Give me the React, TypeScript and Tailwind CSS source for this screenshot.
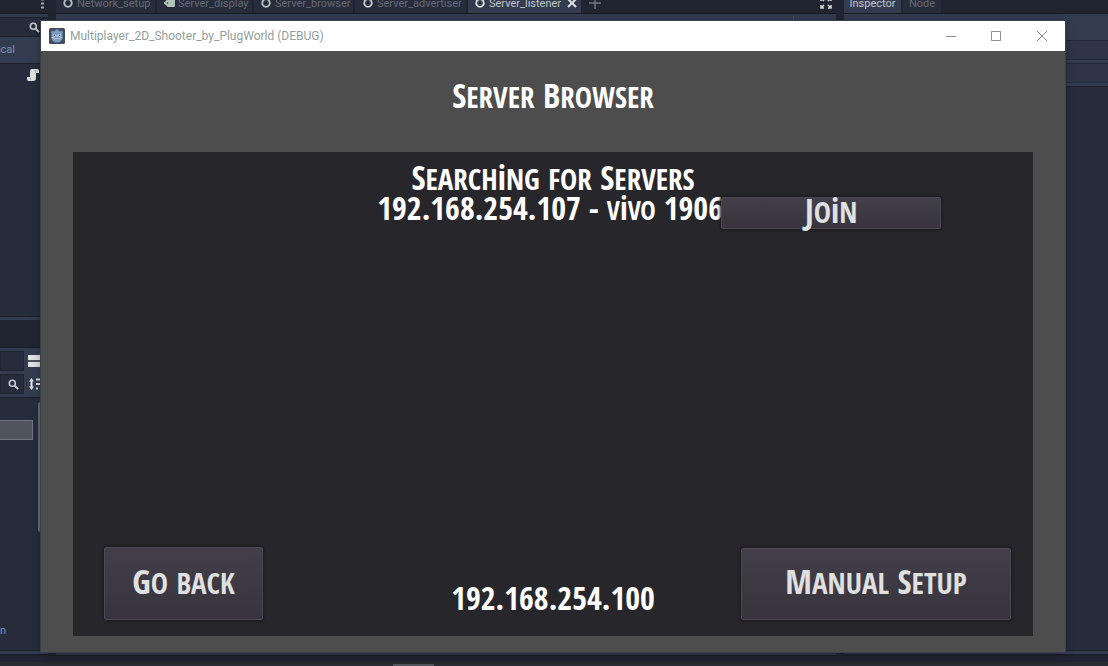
import { type ReactNode } from "react";

const gameFont = "font-['Open_Sans_Condensed','Open_Sans',sans-serif] font-bold whitespace-nowrap";

/* Lowercase letters are drawn as small capitals, apart from the dotted i. */
function Lettering({ children, capsSize = "text-[29px]" }: { children: string; capsSize?: string }) {
  const parts = children.split(/([a-hj-z]+)/);
  return (
    <>
      {parts.map((part, index) =>
        index % 2 === 1 ? (
          <span key={index} className={`leading-none uppercase ${capsSize}`}>
            {part}
          </span>
        ) : (
          part
        ),
      )}
    </>
  );
}

function GameButton({ children, className }: { children: string; className: string }) {
  return (
    <button
      type="button"
      className={`${gameFont} flex items-center justify-center rounded-xs border border-[#4a4954] bg-linear-to-b from-[#423f4a] to-[#37343d] pb-1 text-[34px] leading-[28px] text-[#e0e0e0] shadow-[0_0_3px_1px_#1b1a1e] ${className}`}
    >
      <span>
        <Lettering>{children}</Lettering>
      </span>
    </button>
  );
}

function NodeIcon({ className }: { className: string }) {
  return (
    <svg viewBox="0 0 10 10" className={`size-[10px] shrink-0 ${className}`} aria-hidden="true">
      <circle cx="5" cy="5" r="3.8" fill="none" stroke="currentColor" strokeWidth="1.8" />
    </svg>
  );
}

function TagIcon() {
  return (
    <svg viewBox="0 0 11 10" className="h-[10px] w-[11px] shrink-0 text-[#b4c4bb]" aria-hidden="true">
      <path d="M4 1h6q1 0 1 1v6q0 1-1 1H4L0 5.500v-1z" fill="currentColor" />
      <circle cx="3.500" cy="5" r=".8" fill="#262c3b" />
    </svg>
  );
}

function SearchIcon() {
  return (
    <svg viewBox="0 0 11 11" className="size-[11px] shrink-0 text-[#c6c9cd]" aria-hidden="true">
      <circle cx="4.3" cy="4.3" r="3" fill="none" stroke="currentColor" strokeWidth="1.6" />
      <path d="M6.5 6.5 10 10" stroke="currentColor" strokeWidth="2" />
    </svg>
  );
}

function SceneTab({ icon, label, className }: { icon: ReactNode; label: string; className: string }) {
  return (
    <button
      type="button"
      className={`flex h-5 shrink-0 items-center border-r-2 border-[#1f2430] bg-[#262c3b] text-[#666a74] ${className}`}
    >
      {icon}
      <span className="pt-[2px] whitespace-nowrap">{label}</span>
    </button>
  );
}

function LeftDock() {
  return (
    <aside className="flex w-12 shrink-0 flex-col">
      <div className="flex h-[14px] justify-end border-b border-[#171b25] pr-1">
        <svg viewBox="0 0 3 14" className="h-[14px] w-[3px] text-[#a4a7ab]" aria-hidden="true">
          <path d="M0 0h3v.6H0zM0 2.500h3v2H0zM0 6.500h3v2H0z" fill="currentColor" />
        </svg>
      </div>
      <div className="flex h-[50px] flex-col border-b border-[#1b202c] bg-[#333b4f] pt-[3px]">
        <div className="flex h-5 shrink-0 items-center border-y border-[#1b202c] bg-[#262c3b] pl-[29px]">
          <SearchIcon />
        </div>
        <span className="flex w-[15px] justify-end self-start overflow-hidden">
          <span className="leading-[26px] text-[#7e93b4]">Local</span>
        </span>
      </div>
      <div className="h-[252px] bg-[#262c3b] pt-[5px] pl-[27px]">
        <svg viewBox="0 0 12 12" className="size-3 text-[#e0e0e0]" aria-hidden="true">
          <path d="M5 0h5.500Q12 0 12 2v2H9v5q0 3-3 3H2q-2 0-2-2V8h3V2q0-2 2-2z" fill="currentColor" />
          <path d="M8.500 1v2.500M3.500 8.500v2" stroke="#8b8f97" strokeWidth=".8" />
        </svg>
      </div>
      <div className="h-1 border-t border-[#1b202c] bg-[#333b4f]" />
      <div className="h-[27px]" />
      <div className="flex h-[51px] flex-col gap-[3px] border-y border-[#1b202c] bg-[#333b4f] pt-[3px]">
        <div className="flex items-center gap-1">
          <span className="h-5 w-6 border border-[#1e2431] bg-[#262c3b]" />
          <svg viewBox="0 0 16 12" className="h-3 w-4 shrink-0 text-[#e0e0e0]" aria-hidden="true">
            <path d="M0 0h16v5H0zM0 7h16v5H0z" fill="currentColor" />
            <path d="M0 6h16" stroke="#686d78" />
          </svg>
        </div>
        <div className="flex items-center gap-1">
          <span className="flex h-5 w-6 items-center border border-[#1e2431] bg-[#262c3b] pl-[7px]">
            <SearchIcon />
          </span>
          <svg viewBox="0 0 16 12" className="h-3 w-4 shrink-0 text-[#e0e0e0]" aria-hidden="true">
            <path d="M3.500 0 6 3.500H4.500v5H6L3.500 12 1 8.500h1.500v-5H1zM8 .5h7v2H8zM8 5h4v2H8zM8 9.500h2v2H8z" fill="currentColor" />
          </svg>
        </div>
      </div>
      <div className="flex min-h-0 flex-1 bg-[#262c3b]">
        <div className="flex w-[38px] flex-col items-start pt-[22px]">
          <span className="h-5 w-[33px] border border-l-0 border-[#70747c] bg-[#50545f]" />
          <span className="mt-[180px] leading-[22px] text-[#7e93b4]">n</span>
        </div>
        <span className="mt-1 h-[130px] w-[5px] rounded-full bg-[#666b76]" />
      </div>
      <div className="h-[5px] border-y border-[#1b202c] bg-[#333b4f]" />
    </aside>
  );
}

function SceneArea() {
  return (
    <main className="flex min-w-0 flex-1 flex-col">
      <div className="flex h-[14px] items-end overflow-hidden border-b border-[#171b25]">
        <SceneTab className="w-[101px] gap-1 pl-[7px]" label="Network_setup" icon={<NodeIcon className="text-[#b4c4bb]" />} />
        <SceneTab className="w-[97px] gap-[3px] pl-[7px]" label="Server_display" icon={<TagIcon />} />
        <SceneTab className="w-[101px] gap-1 pl-[7px]" label="Server_browser" icon={<NodeIcon className="text-[#b4c4bb]" />} />
        <SceneTab className="w-[113px] gap-1 pl-2" label="Server_advertiser" icon={<NodeIcon className="text-[#c8cac9]" />} />
        <button type="button" className="flex h-5 w-[113px] shrink-0 items-center gap-1 bg-[#333b4f] pr-1 pl-[7px] text-[#c3c6ca]">
          <NodeIcon className="text-[#e0e0e0]" />
          <span className="pt-[2px] whitespace-nowrap">Server_listener</span>
          <svg viewBox="0 0 10 10" className="ml-auto size-[10px] shrink-0 text-[#e0e0e0]" aria-hidden="true">
            <path d="m1 1 8 8M9 1 1 9" stroke="currentColor" strokeWidth="2" />
          </svg>
        </button>
        <button type="button" aria-label="New scene" className="ml-2 flex h-5 items-center text-[#717580]">
          <svg viewBox="0 0 12 12" className="size-3" aria-hidden="true">
            <path d="M6 0v12M0 6h12" stroke="currentColor" strokeWidth="1.500" />
          </svg>
        </button>
        <button type="button" aria-label="Distraction free mode" className="mr-1 ml-auto flex h-5 items-center text-[#d0d2d4]">
          <svg viewBox="0 0 12 12" className="size-3" aria-hidden="true">
            <path d="M1 1l3 3M11 1 8 4M1 11l3-3M11 11 8 8M1 4V1h3M8 1h3v3M1 8v3h3M8 11h3V8" fill="none" stroke="currentColor" strokeWidth="1.600" />
          </svg>
        </button>
      </div>
      <div className="flex-1 bg-[#333b4f] pt-[2px]">
        <div className="mr-[42px] ml-auto h-5 w-px bg-[#4a5162]" />
      </div>
    </main>
  );
}

function Inspector() {
  return (
    <aside className="flex w-[264px] shrink-0 flex-col">
      <div className="flex h-[14px] items-end gap-[2px] overflow-hidden border-b border-[#171b25]">
        <button type="button" className="h-5 w-[57px] bg-[#333b4f] pt-px leading-5 text-[#c3c6ca]">Inspector</button>
        <button type="button" className="h-5 w-[38px] bg-[#262c3b] pt-px leading-5 text-[#666a74]">Node</button>
      </div>
      <div className="flex h-[73px] flex-col gap-[3px] border-b border-[#1b202c] bg-[#333b4f] pt-[26px]">
        <div className="h-5 border-y border-[#222938] bg-[#2e3547]" />
        <div className="h-5 border-y border-[#222938] bg-[#2e3547]" />
      </div>
      <div className="flex-1 bg-[#262c3b]" />
      <div className="h-[5px] border-y border-[#1b202c] bg-[#333b4f]" />
    </aside>
  );
}

function GodotIcon() {
  return (
    <svg viewBox="0 0 16 16" className="size-4 shrink-0" aria-hidden="true">
      <rect width="16" height="16" rx="1.500" fill="#414b60" />
      <path d="M2.500 5.500 2 4l1.500-1.500L5 3.500l1-.5.300-1.500h3.400L10 3l1 .5 1.500-1L14 4l-.5 1.500V11q-2 3.500-5.500 3.500T2.500 11z" fill="#7d9cc0" />
      <path d="M2.500 9.500h2l.5 1.500h1.500l.5-.8h2l.5.8H11l.5-1.500h2" fill="none" stroke="#b9cadd" strokeWidth=".8" />
      <circle cx="5.200" cy="7.300" r="1.300" fill="#c9d6e4" />
      <circle cx="10.800" cy="7.300" r="1.300" fill="#c9d6e4" />
      <circle cx="5.300" cy="7.300" r=".8" fill="#394559" />
      <circle cx="10.700" cy="7.300" r=".8" fill="#394559" />
      <path d="M8 7v1.800" stroke="#c9d6e4" />
    </svg>
  );
}

function GameWindow() {
  return (
    <section className="absolute top-[21px] right-[43px] bottom-[14px] left-[41px] flex flex-col bg-[#4d4d4d] shadow-[0_0_0_1px_#3b404b,0_2px_8px_rgba(0,0,0,0.35)]">
      <header className="flex h-[30px] shrink-0 items-center bg-white pl-2">
        <GodotIcon />
        <span className="ml-[5px] text-[12px] whitespace-nowrap text-[#94a09c]">
          Multiplayer_2D_Shooter_by_PlugWorld (DEBUG)
        </span>
        <div className="ml-auto flex h-full text-[#8e8e8e]">
          <button type="button" aria-label="Minimize" className="flex w-[45px] items-center justify-center">
            <svg viewBox="0 0 10 10" className="size-[10px]" aria-hidden="true">
              <path d="M0 5.500h10" stroke="currentColor" />
            </svg>
          </button>
          <button type="button" aria-label="Maximize" className="flex w-[45px] items-center justify-center">
            <svg viewBox="0 0 10 10" className="size-[10px]" aria-hidden="true">
              <path d="M.5.5h9v9h-9z" fill="none" stroke="currentColor" />
            </svg>
          </button>
          <button type="button" aria-label="Close" className="flex w-[47px] items-center justify-center">
            <svg viewBox="0 0 10 10" className="size-[10px]" aria-hidden="true">
              <path d="m0 0 10 10M10 0 0 10" stroke="currentColor" />
            </svg>
          </button>
        </div>
      </header>
      <h1 className={`${gameFont} h-[101px] shrink-0 pt-7 text-center text-[34px] leading-[32px] text-white`}>
        <Lettering>Server Browser</Lettering>
      </h1>
      <div className="mx-8 mb-4 flex min-h-0 flex-1 flex-col bg-[#27262b]">
        <p className={`${gameFont} mt-[11px] text-center text-[34px] leading-[28px] text-white`}>
          <Lettering>Searching for Servers</Lettering>
        </p>
        <div className="flex items-start pl-[32%]">
          <p className={`${gameFont} -ml-[3px] w-[344px] shrink-0 overflow-hidden text-[32px] leading-[30px] text-white`}>
            <Lettering capsSize="text-[26px]">192.168.254.107 - vivo 1906</Lettering>
          </p>
          <GameButton className="mt-1 h-8 w-[220px] shrink-0">Join</GameButton>
        </div>
        <div className="mt-auto mb-4 grid grid-cols-[1fr_auto_1fr] items-end px-[22px]">
          <GameButton className="ml-[9px] h-[73px] w-[159px]">Go back</GameButton>
          <p className={`${gameFont} pb-[2px] text-[32px] leading-[40px] text-white`}>192.168.254.100</p>
          <GameButton className="h-[72px] w-[270px] justify-self-end">Manual Setup</GameButton>
        </div>
      </div>
    </section>
  );
}

export default function App() {
  return (
    <div className="relative flex h-screen min-h-[560px] flex-col overflow-hidden bg-[#202531] font-['Roboto','Noto_Sans',sans-serif] text-[11px]">
      <div className="flex min-h-0 flex-1 gap-2">
        <LeftDock />
        <SceneArea />
        <Inspector />
      </div>
      <footer className="flex h-[11px] shrink-0 items-end border-t border-[#1b202c]">
        <div className="h-1 flex-1 bg-[#282b32] pt-[2px]">
          <div className="ml-[393px] h-[2px] w-[41px] bg-[#50545f]" />
        </div>
      </footer>
      <GameWindow />
    </div>
  );
}
